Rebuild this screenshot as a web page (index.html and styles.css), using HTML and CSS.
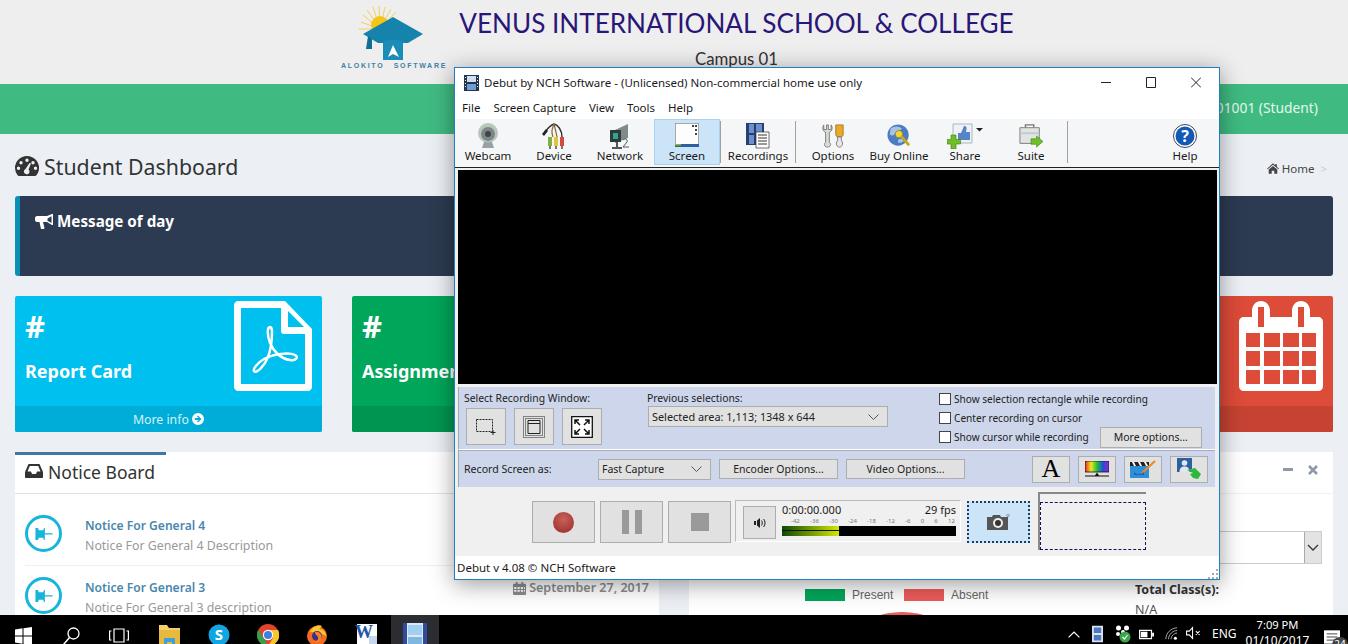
FILE: index.html
```html
<!DOCTYPE html>
<html lang="en">
<head>
  <meta charset="UTF-8">
  <title>Student Dashboard</title>
  <link rel="stylesheet" href="styles.css">
</head>
<body>
<div class="screen">
  <div class="page">
    <header class="site-head">
      <div class="logo">
        <svg class="logo-art" width="80" height="56" viewBox="0 0 80 56">
          <g stroke="#f3c53a" stroke-width="1" opacity=".75">
            <path d="M34 24L15 17M34 24L17 10M34 24L21 5M34 24L27 2M34 24L33 1M34 24L39 2M34 24L45 4M34 24L50 7M34 24L13 24"/>
          </g>
          <circle cx="34" cy="20" r="9" fill="#f5c518"/>
          <path d="M47 12L77 29 62 38H32L17 29z" fill="#1583ab"/>
          <path d="M22 31L26 34V44H20z" fill="#0f6f92"/>
          <path d="M37 37c5-3 15-3 20 0v18H37z" fill="#1a8db6"/>
          <path d="M47 40l6 12-6-3-5 3z" fill="#fff"/>
        </svg>
        <div class="logo-text"><span>ALOKITO</span><span>SOFTWARE</span></div>
      </div>
      <div class="school">
        <h1>VENUS INTERNATIONAL SCHOOL &amp; COLLEGE</h1>
        <p>Campus 01</p>
      </div>
    </header>
    <div class="green-bar">901001 (Student)</div>

    <main class="content">
      <div class="title-row">
        <h2>
          <svg class="ico-dash" viewBox="0 0 24 20"><path fill="#333" fill-rule="evenodd" d="M12 0a12 12 0 0 1 12 12c0 3-1 5.500-2.600 7.300-.3.400-.8.700-1.400.700H4c-.6 0-1.100-.3-1.400-.7A11.700 11.700 0 0 1 0 12 12 12 0 0 1 12 0zM12 2.500a1.700 1.700 0 1 0 0 3.400 1.700 1.700 0 0 0 0-3.400zM6 5a1.700 1.700 0 1 0 0 3.400A1.700 1.700 0 0 0 6 5zM18 5a1.700 1.700 0 1 0 0 3.400A1.700 1.700 0 0 0 18 5zM3.500 10.500a1.700 1.700 0 1 0 0 3.400 1.700 1.700 0 0 0 0-3.400zM20.500 10.500a1.700 1.700 0 1 0 0 3.400 1.700 1.700 0 0 0 0-3.400zM14.500 7L10.500 13a2.800 2.800 0 1 0 3 .4L16 7.500z"/></svg>
          Student Dashboard
        </h2>
        <div class="crumb">
          <svg class="ico-home" viewBox="0 0 14 12"><path fill="#444" d="M7 0l2.500 2.200V1h2v3l2.500 2.200-.7.800L7 1.700.7 7 0 6.200zM2 7.300L7 3l5 4.300V12H8.500V8.500h-3V12H2z"/></svg>
          Home <span class="crumb-sep">&gt;</span>
        </div>
      </div>

      <section class="message">
        <h3>
          <svg class="ico-horn" viewBox="0 0 18 15"><path fill="#fff" fill-rule="evenodd" d="M17 0h1v11h-1l-5-3H8l1.500 6-.5 1H6l-1.500-7H2C1 8 0 7 0 6V4c0-1 1-2 2-2h10zM16.500 2.200L12.500 4.500v2.200l4 2.200z"/></svg>
          Message of day
        </h3>
      </section>

      <section class="cards">
        <div class="card card-blue">
          <div class="card-body">
            <div class="card-text"><b>#</b><strong>Report Card</strong></div>
            <svg class="card-ico-pdf" viewBox="0 0 78 90">
              <path fill="#fff" fill-rule="evenodd" d="M4 0h47l27 28v58c0 2-2 4-4 4H4c-2 0-4-2-4-4V4c0-2 2-4 4-4zM7 7v76h64V33H50c-2 0-3-1-3-3V7zM54 10v16h16z"/>
              <path fill="none" stroke="#fff" stroke-width="2.500" d="M36 26c-3 0-3 8 0 16 3 7 10 16 20 17 6 1 9-3 5-5-6-3-22-1-31 4-7 4-11 10-10 12 2 3 10-4 14-14 3-8 4-17 4-25 0-3-1-5-2-5z"/>
            </svg>
          </div>
          <div class="card-foot">More info
            <svg class="ico-go" viewBox="0 0 12 12"><path fill="#fff" fill-rule="evenodd" d="M6 0a6 6 0 1 1 0 12A6 6 0 0 1 6 0zM6 2.500L5 3.500 6.700 5.100H2.800v1.800h3.900L5 8.500l1 1L9.500 6z"/></svg>
          </div>
        </div>
        <div class="card card-green">
          <div class="card-body">
            <div class="card-text"><b>#</b><strong>Assignment</strong></div>
          </div>
          <div class="card-foot"></div>
        </div>
        <div class="card card-hidden"></div>
        <div class="card card-red">
          <div class="card-body card-body-end">
            <svg class="card-ico-cal" viewBox="0 0 84 90">
              <path fill="#fff" fill-rule="evenodd" d="M5 16h8v-6c0-6 4-10 9-10s9 4 9 10v6h22v-6c0-6 4-10 9-10s9 4 9 10v6h8c3 0 5 2 5 5v64c0 3-2 5-5 5H5c-3 0-5-2-5-5V21c0-3 2-5 5-5zM19 6v20h6V6zM59 6v20h6V6zM7 32v14h14V32zM25 32v14h16V32zM44 32v14h16V32zM63 32v14h14V32zM7 50v15h14V50zM25 50v15h16V50zM44 50v15h16V50zM63 50v15h14V50zM7 69v14h14V69zM25 69v14h16V69zM44 69v14h16V69zM63 69v14h14V69z"/>
            </svg>
          </div>
          <div class="card-foot"></div>
        </div>
      </section>

      <section class="panels">
        <div class="panel">
          <div class="panel-head">
            <h4 class="tab">
              <svg class="ico-inbox" viewBox="0 0 18 14"><path fill="#333" fill-rule="evenodd" d="M3.500 0h11L18 8v5c0 .6-.4 1-1 1H1c-.6 0-1-.4-1-1V8zM4.800 2L2.500 7.500H6L7 10h4l1-2.500h3.500L13.200 2z"/></svg>
              Notice Board
            </h4>
          </div>
          <ul class="notices">
            <li>
              <span class="pin"><svg viewBox="0 0 20 14"><path fill="#19b4dc" d="M0 0h3l1 2.500h5L10 0h1v14h-1L9 11.500H4L3 14H0zM11 6h9v1.500h-9z"/></svg></span>
              <div class="notice-text"><a>Notice For General 4</a><p>Notice For General 4 Description</p></div>
              <span class="notice-date">September 27, 2017</span>
            </li>
            <li>
              <span class="pin"><svg viewBox="0 0 20 14"><path fill="#19b4dc" d="M0 0h3l1 2.500h5L10 0h1v14h-1L9 11.500H4L3 14H0zM11 6h9v1.500h-9z"/></svg></span>
              <div class="notice-text"><a>Notice For General 3</a><p>Notice For General 3 description</p></div>
              <span class="notice-date">
                <svg class="ico-cal" viewBox="0 0 14 14"><path fill="#8c8c8c" fill-rule="evenodd" d="M1 2h2V0h2v2h4V0h2v2h2c.6 0 1 .4 1 1v10c0 .6-.4 1-1 1H1c-.6 0-1-.4-1-1V3c0-.6.4-1 1-1zM1.200 5.500v2h2.500v-2zM4.800 5.500v2h2.500v-2zM8.400 5.500v2h2.400v-2zM11.800 5.500v2h1v-2zM1.200 8.500v2h2.500v-2zM4.800 8.500v2h2.500v-2zM8.400 8.500v2h2.400v-2zM11.800 8.500v2h1v-2z"/></svg>
                September 27, 2017</span>
            </li>
          </ul>
        </div>
        <div class="panel">
          <div class="panel-head panel-head-end">
            <span class="tool-min"></span>
            <svg class="tool-x" viewBox="0 0 10 10"><path stroke="#8d99a8" stroke-width="2.600" d="M1 1l8 8M9 1L1 9"/></svg>
          </div>
          <div class="att-select"><span class="att-arrow"><svg width="12" height="8" viewBox="0 0 12 8"><path fill="none" stroke="#333" stroke-width="1.300" d="M1 1l5 5 5-5"/></svg></span></div>
          <div class="att-body">
            <div class="att-chart">
              <div class="legend">
                <i class="swatch sw-present"></i><span>Present</span>
                <i class="swatch sw-absent"></i><span>Absent</span>
              </div>
              <div class="pie"></div>
            </div>
            <div class="att-side"><strong>Total Class(s):</strong><p>N/A</p></div>
          </div>
        </div>
      </section>
    </main>
  </div>

  <div class="taskbar">
    <svg class="tb-ico tb-win" viewBox="0 0 17 18"><path fill="#fff" d="M0 2.500L7.500 1.300V8.500H0zM8.500 1.200L17 0V8.500H8.500zM0 9.500H7.500V16.700L0 15.500zM8.500 9.500H17V18L8.500 16.800z"/></svg>
    <svg class="tb-ico tb-search" viewBox="0 0 17 18"><circle cx="10.500" cy="6.500" r="5.500" fill="none" stroke="#fff" stroke-width="1.300"/><path stroke="#fff" stroke-width="1.500" d="M6.500 10.500L.5 17.500"/></svg>
    <svg class="tb-ico tb-task" viewBox="0 0 20 15"><path fill="none" stroke="#fff" stroke-width="1.200" d="M5 1h10v13H5zM2.500 3H.6v9h1.900M17.500 3h1.900v9h-1.900"/></svg>
    <svg class="tb-ico tb-app" viewBox="0 0 22 22"><path fill="#f5cf6b" d="M0 1h8l2 3h11v18H0z"/><path fill="#e8b93f" d="M0 6h21v16H0z"/><path fill="#3f9fd8" d="M5 14h11v8h-3v-4H8v4H5z"/></svg>
    <svg class="tb-ico tb-app" viewBox="0 0 22 22"><circle cx="11" cy="11" r="10.500" fill="#11a5e3"/><text x="11" y="16" text-anchor="middle" class="tb-skype">S</text></svg>
    <svg class="tb-ico tb-app" viewBox="0 0 22 22"><circle cx="11" cy="11" r="11" fill="#e0442f"/><path fill="#2da44e" d="M11 22A11 11 0 0 1 1.200 6L7 15z"/><path fill="#f7c62f" d="M11 22l5-8-5-8h10a11 11 0 0 1-10 16z"/><circle cx="11" cy="11" r="5.200" fill="#fff"/><circle cx="11" cy="11" r="4" fill="#3f7fe0"/></svg>
    <svg class="tb-ico tb-app" viewBox="0 0 22 22"><circle cx="11" cy="12" r="10" fill="#f26b21"/><path fill="#ffc52e" d="M4 8c2-5 8-8 12-6l-3 3c4 0 7 3 7 7l-6-3z"/><circle cx="11" cy="12" r="5" fill="#39308f"/><path fill="#f58220" d="M9 8c5-1 8 3 6 8-2 3-7 3-9 1 4 1 7-1 6-4-1-2-3-2-3-5z"/></svg>
    <svg class="tb-ico tb-app" viewBox="0 0 22 22"><path fill="#fff" d="M2 0h20v22H2z"/><path fill="#c8d7ee" d="M14 12h8v10h-8z"/><text x="0" y="14" class="tb-word">W</text></svg>
    <div class="tb-active">
      <svg width="24" height="29" viewBox="0 0 24 29"><path fill="#dfe7f7" d="M0 0h24v29H0z"/><path fill="#324a9c" d="M0 0h4v29H0zM20 0h4v29h-4z"/><path fill="#9fd0f2" d="M5 2h14v10H5z"/><path fill="#7fb7e3" d="M5 14h14v15H5z"/></svg>
    </div>
    <div class="tray">
      <svg class="tray-chev" viewBox="0 0 12 7"><path fill="none" stroke="#fff" stroke-width="1.200" d="M.6 6.400L6 1l5.400 5.400"/></svg>
      <svg class="tray-ico" viewBox="0 0 12 18"><path fill="#d5e3f5" d="M0 0h12v18H0z"/><path fill="#4e79bd" d="M2 2h8v6H2zM2 10h8v6H2z"/></svg>
      <svg class="tray-nv" viewBox="0 0 16 18"><g fill="#fff"><circle cx="3.500" cy="3" r="2.500"/><circle cx="11.500" cy="3" r="2.500"/><circle cx="3" cy="9" r="2"/><circle cx="8" cy="7" r="2"/></g><circle cx="10" cy="12" r="5.500" fill="#3aa64a"/><path stroke="#fff" stroke-width="1.200" fill="none" d="M7.500 12l2 2 3-4"/></svg>
      <svg class="tray-bat" viewBox="0 0 16 11"><path fill="none" stroke="#fff" stroke-width="1.300" d="M.7 1h12.600v9H.7z"/><path fill="#fff" d="M2 2.500h7v6H2zM14 3.500h2v4h-2z"/></svg>
      <svg class="tray-wifi" viewBox="0 0 15 15"><g fill="none" stroke="#bbb" stroke-width="1"><path d="M1 14C1 7 7 1 14 1M4 14c0-5 5-10 10-10M7 14c0-3 3-7 7-7"/></g><circle cx="12" cy="13" r="1.800" fill="#fff"/></svg>
      <svg class="tray-vol" viewBox="0 0 16 14"><path fill="none" stroke="#fff" stroke-width="1.100" d="M.6 5h2.900L7 1.200v11.600L3.500 9H.6zM10.500 5l4 4M14.500 5l-4 4"/></svg>
      <span class="tray-lang">ENG</span>
      <div class="tray-clock"><span class="tray-time">7:09 PM</span><span>01/10/2017</span></div>
      <div class="tray-note">
        <svg width="16" height="14" viewBox="0 0 18 15"><path fill="#fff" d="M0 0h18v15H0z"/><path stroke="#333" d="M3 4h12M3 7.500h12M3 11h9"/></svg>
        <span class="tray-badge">24</span>
      </div>
    </div>
  </div>

  <div class="debut">
    <div class="titlebar">
      <svg class="app-ico" width="15" height="16" viewBox="0 0 15 16"><path fill="#26354f" d="M0 0h15v16H0z"/><path fill="#cfe0f2" d="M3 1h9v6H3z"/><path fill="#6f9fd2" d="M3 9h9v6H3z"/><path fill="#eef" d="M1 2h1v1H1zM1 5h1v1H1zM1 8h1v1H1zM1 11h1v1H1zM13 2h1v1h-1zM13 5h1v1h-1zM13 8h1v1h-1zM13 11h1v1h-1z"/></svg>
      <span class="title-text">Debut by NCH Software - (Unlicensed) Non-commercial home use only</span>
      <span class="win-btns">
        <svg width="10" height="11" viewBox="0 0 10 11"><path stroke="#222" d="M0 5.500h10"/></svg>
        <svg width="10" height="11" viewBox="0 0 10 11"><path fill="none" stroke="#222" d="M.5.500h9v10h-9z"/></svg>
        <svg width="10" height="11" viewBox="0 0 10 11"><path stroke="#222" d="M0 .5l10 10M10 .5l-10 10"/></svg>
      </span>
    </div>
    <nav class="menubar"><span>File</span><span>Screen Capture</span><span>View</span><span>Tools</span><span>Help</span></nav>
    <div class="toolbar">
      <div class="tool">
        <svg viewBox="0 0 24 26"><circle cx="12" cy="10" r="10" fill="#b7c8b8"/><circle cx="12" cy="11" r="7" fill="#7d8688"/><circle cx="12" cy="11" r="3" fill="#3d4448"/><path fill="#99a3a7" d="M8 19h8l2 6H6z"/></svg>
        <span>Webcam</span>
      </div>
      <div class="tool">
        <svg viewBox="0 0 24 26"><path fill="none" stroke="#333" stroke-width="1.400" d="M3 9C6 5 9 2 12 1c4 1 8 6 8 13"/><path fill="none" stroke="#8a6a3a" stroke-width="1.200" d="M12 1c-2 5-3 8-1 13M12 1c1 4 2 8 3 13"/><path fill="#222" d="M0 11l4-5 2 2-4 5z"/><path fill="#7fb13c" d="M6 14h4v9H6z"/><path fill="#e3c33a" d="M12 14h4v9h-4z"/><path fill="#d64a3a" d="M18 14h4v9h-4z"/><path fill="#777" d="M7 23h2v3H7zM13 23h2v3h-2zM19 23h2v3h-2z"/></svg>
        <span>Device</span>
      </div>
      <div class="tool">
        <svg viewBox="0 0 24 26"><path fill="#7f8a8a" d="M7 7l13-6v14L7 20z"/><path fill="#2f3a3a" d="M2 7h11v12H2z"/><path fill="#34a394" d="M5 10h5v6H5z"/><path fill="#555" d="M8 19h2v5H8zM4 24h10v2H4z"/><path fill="none" stroke="#555" d="M15 17c2-2 5-1 4 2l-4 5h6"/></svg>
        <span>Network</span>
      </div>
      <div class="tool tool-on">
        <svg class="ico-wide" viewBox="0 0 24 24"><path fill="#fdfdfd" stroke="#555" stroke-width=".6" d="M.3.300h23.400v23H.3z"/><path fill="#2f5f9f" d="M0 21h24v3H0z"/><path fill="#8cb82f" d="M0 21h6v1.500H0z"/><path fill="#444" d="M17 2h2v2h-2zM20 2h2v2h-2zM20 6h2v2h-2zM20 10h2v2h-2z"/></svg>
        <span>Screen</span>
      </div>
      <i class="tool-sep"></i>
      <div class="tool tool-rec">
        <svg viewBox="0 0 24 26"><path fill="#27406f" d="M0 0h18v22H0z"/><path fill="#6d8fd0" d="M3 1h5v9H3zM10 1h6v9h-6zM3 12h5v9H3z"/><path fill="#fff" stroke="#333" stroke-width=".7" d="M10 9h13v16H10z"/><path stroke="#333" d="M12 12h9M12 15h9M12 18h9M12 21h9"/></svg>
        <span>Recordings</span>
      </div>
      <i class="tool-sep"></i>
      <div class="tool">
        <svg viewBox="0 0 26 26"><path fill="#d7ddd5" stroke="#777" d="M3 1C1 4 2 8 5 9v11c-2 1-2 5 2 5s4-4 2-5V9c3-1 4-5 2-8v5H8V1H6v5H3z"/><path fill="#e9a92b" stroke="#aa7a1c" d="M16 1h8v10c0 2-1 3-3 3h-2c-2 0-3-1-3-3z"/><path fill="#e8e8e8" stroke="#777" d="M18 14h4v4c2 1 2 7-2 7s-4-6-2-7z"/></svg>
        <span>Options</span>
      </div>
      <div class="tool">
        <svg viewBox="0 0 26 26"><circle cx="12" cy="12" r="11.500" fill="#4b7dc4"/><path fill="#a9c3e6" d="M4 5c4-3 9-3 12 0-2 3-5 2-7 5s-4 3-6 1zM12 17c3-2 6-1 8 0-3 3-6 4-8 3z"/><circle cx="13" cy="11" r="4" fill="#f1d83a" stroke="#806f0e" stroke-width=".7"/><path stroke="#c7a915" stroke-width="3" d="M15 13l9 10"/></svg>
        <span>Buy Online</span>
      </div>
      <div class="tool tool-share">
        <svg viewBox="0 0 36 26"><path fill="#eef2f8" stroke="#9aa" stroke-width=".8" d="M6 1h19v19H6z"/><path fill="#5684c7" d="M11 10h3l3-7c3 0 3 2 2 6h4v8H11z"/><path fill="#6fbf2a" stroke="#3f7a14" stroke-width=".6" d="M4 12h5v4.500h4.500v4.500H9v5H4v-5H0v-4.500h4z"/><path fill="#222" d="M29 5h7l-3.500 3.500z"/></svg>
        <span>Share</span>
      </div>
      <div class="tool">
        <svg viewBox="0 0 26 26"><path fill="none" stroke="#777" stroke-width="1.500" d="M7 4V1h9v3"/><path fill="#e2e4e4" stroke="#777" d="M1 4h21v17H1z"/><path fill="#bcc" d="M1 9h21v2H1z"/><path fill="#6fbe2c" stroke="#3c7c12" stroke-width=".6" d="M13 16h6v-3l7 6-7 6v-3h-6z"/></svg>
        <span>Suite</span>
      </div>
      <i class="tool-sep tool-sep-last"></i>
      <div class="tool tool-help">
        <svg viewBox="0 0 24 24"><circle cx="12" cy="12" r="11.500" fill="#fff" stroke="#445"/><circle cx="12" cy="12" r="9.500" fill="#1259b5"/><text x="12" y="18" text-anchor="middle" class="help-q">?</text></svg>
        <span>Help</span>
      </div>
    </div>
    <div class="preview"></div>

    <div class="blue-panel panel-select">
      <div class="sel-col">
        <label>Select Recording Window:</label>
        <div class="sel-btns">
          <button class="wbtn sel-btn"><svg width="20" height="16" viewBox="0 0 20 16"><path fill="none" stroke="#222" stroke-dasharray="2 1" d="M.5.500h16v12H.5z"/><path stroke="#222" d="M17 11v5M14.500 13.500h5"/></svg></button>
          <button class="wbtn sel-btn"><svg width="22" height="22" viewBox="0 0 22 22"><path fill="none" stroke="#222" stroke-dasharray="1 1" d="M.5.500h21v21H.5zM2.500 2.500h17v17h-17z"/><path fill="none" stroke="#222" d="M5 4.500h12v13H5zM5 7.500h12"/></svg></button>
          <button class="wbtn sel-btn"><svg width="22" height="22" viewBox="0 0 22 22"><path fill="#fff" stroke="#111" stroke-width="1.300" d="M.7.700h20.600v20.600H.7z"/><path fill="none" stroke="#111" stroke-width="1.500" d="M4 4l5 5M18 4l-5 5M4 18l5-5M18 18l-5-5M4 8V4h4M14 4h4v4M4 14v4h4M18 14v4h-4"/></svg></button>
        </div>
      </div>
      <div class="prev-col">
        <label>Previous selections:</label>
        <div class="wselect prev-select"><span>Selected area: 1,113; 1348 x 644</span><svg width="11" height="6" viewBox="0 0 11 6"><path fill="none" stroke="#555" d="M.5.500l5 5 5-5"/></svg></div>
      </div>
      <div class="check-col">
        <div class="check"><i></i>Show selection rectangle while recording</div>
        <div class="check"><i></i>Center recording on cursor</div>
        <div class="check check-last"><i></i>Show cursor while recording<button class="wbtn more-btn">More options...</button></div>
      </div>
    </div>

    <div class="blue-panel panel-record">
      <label class="rec-label">Record Screen as:</label>
      <div class="wselect fast-select"><span>Fast Capture</span><svg width="11" height="6" viewBox="0 0 11 6"><path fill="none" stroke="#555" d="M.5.500l5 5 5-5"/></svg></div>
      <button class="wbtn opt-btn">Encoder Options...</button>
      <button class="wbtn opt-btn">Video Options...</button>
      <div class="fx-btns">
        <button class="wbtn fx-btn fx-text">A</button>
        <button class="wbtn fx-btn"><svg width="24" height="16" viewBox="0 0 24 16"><defs><linearGradient id="rb"><stop offset="0" stop-color="#e3262b"/><stop offset=".25" stop-color="#f7e51e"/><stop offset=".5" stop-color="#1fc13a"/><stop offset=".75" stop-color="#1f4fd8"/><stop offset="1" stop-color="#a11fd0"/></linearGradient></defs><path d="M0 0h24v11H0z" fill="url(#rb)" stroke="#111" stroke-width=".8"/><path fill="#111" d="M0 14.500h24v1H0zM10 14.500l2-3 2 3z"/></svg></button>
        <button class="wbtn fx-btn"><svg width="26" height="18" viewBox="0 0 26 18"><path fill="#222" d="M0 2h19v4H0z"/><path fill="#fff" d="M2 2h2l2 4H4zM8 2h2l2 4h-2zM14 2h2l2 4h-2z"/><path fill="#2f8fd6" d="M0 6h19v12H0z"/><path stroke="#e88a2a" stroke-width="2.200" d="M12 13L25 1"/><path fill="#2460b0" d="M4 12c3 3 7 3 10 0v3H4z"/></svg></button>
        <button class="wbtn fx-btn"><svg width="24" height="22" viewBox="0 0 24 22"><path fill="#2f5f9f" d="M0 0h15v14H0z"/><circle cx="7.500" cy="5" r="2.800" fill="#dfe7f0"/><path fill="#dfe7f0" d="M2.500 14c0-4 2-5.500 5-5.500s5 1.500 5 5.500z"/><path fill="#2eb83b" d="M10 12l8-2 6 6-3 5-5-1-3-4 3-1z"/></svg></button>
      </div>
    </div>

    <div class="control-bar">
      <button class="wbtn ctl-btn"><span class="rec-dot"></span></button>
      <button class="wbtn ctl-btn"><span class="pause-bars"><i></i><i></i></span></button>
      <button class="wbtn ctl-btn"><span class="stop-box"></span></button>
      <div class="meter-box">
        <button class="wbtn spk-btn"><svg width="12" height="10" viewBox="0 0 12 10"><path fill="#222" d="M0 3h2v4H0zM3 2.500L6 0v10L3 7.500z"/><path fill="none" stroke="#222" d="M7.500 2.500c1 1.500 1 3.500 0 5M9.500 1c2 2.500 2 5.500 0 8"/></svg></button>
        <div class="meter-col">
          <div class="meter-top"><span>0:00:00.000</span><span>29 fps</span></div>
          <div class="meter-ticks"><span>-42</span><span>-36</span><span>-30</span><span>-24</span><span>-18</span><span>-12</span><span>-6</span><span>0</span><span>6</span><span>12</span></div>
          <div class="meter-bar"><div class="meter-fill"></div></div>
        </div>
      </div>
      <button class="wbtn snap-btn"><svg width="23" height="16" viewBox="0 0 23 16"><path fill="#555" d="M0 3h5l1-2h7l1 2h7v13H0z"/><circle cx="11" cy="9" r="5" fill="#eee"/><circle cx="11" cy="9" r="3" fill="#333"/><circle cx="21" cy="1.500" r="1.300" fill="none" stroke="#666" stroke-width=".6"/></svg></button>
      <div class="thumb"><div class="thumb-dash"></div></div>
    </div>
    <div class="statusbar">
      <span>Debut v 4.08 © NCH Software</span>
      <svg class="grip" width="10" height="10" viewBox="0 0 10 10"><path fill="#aaa" d="M8 0h2v2H8zM4 4h2v2H4zM8 4h2v2H8zM0 8h2v2H0zM4 8h2v2H4zM8 8h2v2H8z"/></svg>
    </div>
  </div>
</div>
</body>
</html>
```

FILE: styles.css
```css
* {
  box-sizing: border-box;
}

html, body {
  margin: 0;
  height: 100%;
  overflow: hidden;
}

body {
  font-family: "Noto Sans", Arial, sans-serif;
  color: #333;
}

.screen {
  position: relative;
  width: 1348px;
  height: 644px;
  overflow: hidden;
  display: flex;
  flex-direction: column;
}

.page {
  flex: 1;
  min-height: 0;
  overflow: hidden;
  background: #ecf0f5;
}

/* school header */
.site-head {
  height: 84px;
  background: #eeeeee;
  display: flex;
  padding-left: 341px;
}

.logo {
  width: 106px;
  padding-top: 5px;
  display: flex;
  flex-direction: column;
  align-items: center;
}

.logo-art {
  margin-left: -16px;
  display: block;
}

.logo-text {
  width: 100%;
  display: flex;
  justify-content: space-between;
  font-family: "Liberation Sans", sans-serif;
  font-size: 7px;
  font-weight: bold;
  letter-spacing: 1.7px;
  color: #3d83a5;
  margin-top: 1px;
}

.school {
  width: 555px;
  margin-left: 12px;
  text-align: center;
}

.school h1 {
  margin: 6px 0 0;
  font-family: Lato, sans-serif;
  font-size: 26.100px;
  font-weight: 400;
  line-height: 34px;
  white-space: nowrap;
  color: #2a1678;
}

.school p {
  margin: 9px 0 0;
  font-family: Lato, sans-serif;
  font-size: 16.800px;
  line-height: 20px;
  color: #333;
}

.green-bar {
  height: 50px;
  background: #3fbb82;
  color: #e6f7ee;
  font-size: 13.800px;
  line-height: 48px;
  text-align: right;
  padding-right: 30px;
}

/* dashboard */
.content {
  padding: 0 15px;
}

.title-row {
  height: 62px;
  display: flex;
  justify-content: space-between;
  align-items: center;
  padding-top: 2px;
}

.title-row h2 {
  margin: 0;
  font-size: 21.300px;
  font-weight: 400;
  display: flex;
  align-items: center;
  gap: 5px;
}

.ico-dash {
  width: 24px;
  height: 20px;
}

.crumb {
  font-size: 11.500px;
  color: #444;
  display: flex;
  align-items: center;
  gap: 3px;
  margin-top: 4px;
  margin-right: 6px;
}

.ico-home {
  width: 12px;
  height: 11px;
}

.crumb-sep {
  color: #ccc;
  margin-left: 3px;
}

.message {
  height: 80px;
  background: #2c3b51;
  border-left: 5px solid #0a8fb8;
  border-radius: 3px;
  padding: 13px 15px;
}

.message h3 {
  margin: 0;
  color: #fff;
  font-size: 15.200px;
  font-weight: 700;
  line-height: 24px;
  display: flex;
  align-items: center;
  gap: 4px;
}

.ico-horn {
  width: 18px;
  height: 15px;
}

.cards {
  margin-top: 20px;
  display: grid;
  grid-template-columns: repeat(4, 307px);
  gap: 30px;
}

.card {
  height: 136px;
  border-radius: 2px;
  color: #fff;
  overflow: hidden;
  display: flex;
  flex-direction: column;
}

.card-body {
  height: 110px;
  padding: 5px 10px 0;
  display: flex;
  justify-content: space-between;
}

.card-body-end {
  justify-content: flex-end;
}

.card-text b {
  display: block;
  font-size: 31px;
  line-height: 42px;
  margin-top: 4px;
}

.card-text strong {
  display: block;
  font-size: 18px;
  line-height: 26px;
  margin-top: 11px;
  white-space: nowrap;
}

.card-ico-pdf {
  width: 78px;
  height: 90px;
}

.card-ico-cal {
  width: 84px;
  height: 90px;
}

.card-foot {
  height: 26px;
  font-size: 12.300px;
  line-height: 28px;
  text-align: center;
  color: #d5f1fa;
}

.ico-go {
  width: 12px;
  height: 12px;
  vertical-align: -1px;
}

.card-blue {
  background: #00c0ef;
}

.card-blue .card-foot {
  background: #00acd8;
}

.card-green {
  background: #00a65a;
}

.card-green .card-foot {
  background: #009551;
}

.card-red {
  background: #dd4b39;
}

.card-red .card-foot {
  background: #c64333;
}

.card-hidden {
  background: #f39c12;
}

/* lower panels */
.panels {
  margin-top: 20px;
  display: grid;
  grid-template-columns: 644px 644px;
  gap: 30px;
}

.panel {
  background: #fff;
  height: 200px;
  border-radius: 2px;
}

.panel-head {
  height: 42px;
  border-bottom: 1px solid #dfe3e6;
}

.panel-head-end {
  border-bottom-color: #f2f2f2;
  display: flex;
  justify-content: flex-end;
  align-items: center;
  gap: 15px;
  padding: 0 15px 6px 0;
}

.tool-min {
  width: 10px;
  height: 3px;
  background: #8d99a8;
}

.tool-x {
  width: 10px;
  height: 10px;
}

.tab {
  margin: 0;
  width: 151px;
  height: 42px;
  border-top: 3px solid #3c78a8;
  padding-left: 10px;
  font-size: 17.500px;
  font-weight: 400;
  line-height: 34px;
  display: flex;
  align-items: flex-start;
  gap: 5px;
  white-space: nowrap;
}

.ico-inbox {
  width: 18px;
  height: 14px;
  margin-top: 9px;
}

.notices {
  list-style: none;
  margin: 0;
  padding: 10px 10px 0;
}

.notices li {
  height: 62px;
  border-bottom: 1px solid #f0f0f0;
  display: flex;
  padding-top: 11px;
}

.pin {
  width: 37px;
  height: 37px;
  border: 3px solid #19b4dc;
  border-radius: 50%;
  display: flex;
  align-items: center;
  justify-content: center;
  flex-shrink: 0;
}

.pin svg {
  width: 18px;
  height: 12px;
}

.notice-text {
  margin: 1px 0 0 23px;
  flex: 1;
  font-size: 12.100px;
}

.notice-text a {
  display: block;
  color: #4a87ad;
  font-weight: 600;
  line-height: 20px;
}

.notice-text p {
  margin: 0;
  color: #999;
  font-size: 12.350px;
  line-height: 20px;
}

.notice-date {
  font-size: 12.500px;
  font-weight: 600;
  color: #8c8c8c;
  line-height: 20px;
  white-space: nowrap;
  display: flex;
  align-items: center;
  gap: 3px;
  height: 20px;
  margin-top: 1px;
}

.ico-cal {
  width: 13px;
  height: 13px;
}

.att-select {
  margin: 37px 11px 0;
  height: 33px;
  border: 1px solid #ccc;
  display: flex;
  justify-content: flex-end;
}

.att-arrow {
  width: 17px;
  background: #e3e3e3;
  border-left: 1px solid #aaa;
  display: flex;
  align-items: center;
  justify-content: center;
}

.att-body {
  margin-top: 20px;
  display: flex;
}

.att-chart {
  width: 446px;
}

.legend {
  display: flex;
  align-items: center;
  padding-left: 116px;
  font-family: "Liberation Sans", sans-serif;
  font-size: 12px;
  color: #666;
  height: 22px;
}

.swatch {
  width: 40px;
  height: 12px;
  margin-right: 7px;
}

.legend span {
  width: 52px;
}

.sw-present {
  background: #00a65a;
}

.sw-absent {
  background: #ec5b5b;
}

.pie {
  width: 160px;
  height: 160px;
  border-radius: 50%;
  background: #e85c5c;
  margin: 6px 0 0 133px;
}

.att-side {
  font-size: 12.500px;
  line-height: 20px;
  margin-top: -4px;
}

.att-side strong {
  display: block;
}

.att-side p {
  margin: 0;
  color: #555;
}

/* windows taskbar */
.taskbar {
  height: 29px;
  flex-shrink: 0;
  background: #000;
  display: flex;
  align-items: flex-start;
  overflow: hidden;
  position: relative;
}

.tb-ico {
  flex-shrink: 0;
  display: block;
}

.tb-win {
  width: 17px;
  height: 18px;
  margin: 12px 0 0 15px;
}

.tb-search {
  width: 17px;
  height: 18px;
  margin: 12px 0 0 31px;
}

.tb-task {
  width: 20px;
  height: 15px;
  margin: 13px 0 0 29px;
}

.tb-app {
  width: 22px;
  height: 22px;
  margin: 9px 0 0 27px;
}

.tb-app:nth-of-type(4) {
  margin-left: 30px;
}

.tb-skype {
  fill: #fff;
  font-size: 15px;
  font-weight: 700;
}

.tb-word {
  fill: #2456a6;
  font-family: "Liberation Serif", serif;
  font-size: 18px;
  font-weight: 700;
}

.tb-active {
  width: 48px;
  height: 29px;
  margin-left: 14px;
  background: #2b2d30;
  padding: 8px 12px 0;
}

.tray {
  margin-left: auto;
  height: 29px;
  display: flex;
  align-items: flex-start;
  color: #fff;
}

.tray-chev {
  width: 12px;
  height: 7px;
  margin-top: 16px;
  margin-right: 12px;
}

.tray-ico {
  width: 11px;
  height: 18px;
  margin-top: 10px;
  margin-right: 12px;
}

.tray-nv {
  width: 16px;
  height: 18px;
  margin-top: 10px;
  margin-right: 8px;
}

.tray-bat {
  width: 15px;
  height: 11px;
  margin-top: 14px;
  margin-right: 11px;
}

.tray-wifi {
  width: 13px;
  height: 15px;
  margin-top: 11px;
  margin-right: 8px;
}

.tray-vol {
  width: 15px;
  height: 14px;
  margin-top: 11px;
  margin-right: 11px;
}

.tray-lang {
  font-size: 12px;
  line-height: 18px;
  margin-top: 10px;
  width: 26px;
}

.tray-clock {
  width: 79px;
  font-size: 12px;
  line-height: 16px;
  text-align: center;
  margin-top: 2px;
}

.tray-clock span {
  display: block;
  white-space: nowrap;
}

.tray-clock .tray-time {
  font-size: 11.200px;
}

.tray-note {
  width: 31px;
  padding: 12px 0 0 7px;
  position: relative;
}

.tray-badge {
  position: absolute;
  left: 15px;
  top: 22px;
  width: 16px;
  height: 16px;
  border-radius: 50%;
  background: #444;
  font-size: 10px;
  line-height: 14px;
  text-align: center;
}

/* debut window */
.debut {
  position: absolute;
  left: 454px;
  top: 67px;
  width: 766px;
  height: 513px;
  background: #f0f0f0;
  border: 1px solid #1f7fbf;
  box-shadow: 0 4px 22px rgba(0, 0, 0, 0.4);
  font-size: 11.500px;
  color: #1a1a1a;
  display: flex;
  flex-direction: column;
}

.titlebar {
  height: 29px;
  background: #fff;
  display: flex;
  align-items: center;
  padding-left: 9px;
  flex-shrink: 0;
}

.app-ico {
  margin-right: 5px;
}

.title-text {
  white-space: nowrap;
}

.win-btns {
  margin-left: auto;
  display: flex;
  gap: 35px;
  padding-right: 18px;
}

.menubar {
  height: 22px;
  background: #fff;
  display: flex;
  gap: 13px;
  padding-left: 7px;
  flex-shrink: 0;
  line-height: 21px;
}

.toolbar {
  height: 49px;
  padding-bottom: 2px;
  background: #f5f6f7;
  border-bottom: 1px solid #222;
  display: flex;
  flex-shrink: 0;
}

.tool {
  width: 66px;
  display: flex;
  flex-direction: column;
  align-items: center;
  padding-top: 3px;
  border: 1px solid transparent;
  line-height: 16px;
}

.tool span {
  margin-top: -1px;
}

.tool svg {
  width: 24px;
  height: 26px;
}

.tool svg.ico-wide {
  width: 24px;
  height: 24px;
  margin-bottom: 2px;
}

.tool-on {
  background: #cce4f7;
  border-color: #a9d2f0;
  margin-left: 1px;
}

.tool-rec {
  width: 74px;
}

.tool-share svg {
  width: 36px;
}

.tool-sep {
  width: 1px;
  height: 42px;
  background: #a0a0a0;
  margin: 2px 0 0;
}

.tool-sep-last {
  margin-left: 3px;
}

.tool-rec + .tool-sep {
  margin-right: 4px;
}

.tool-help {
  margin-left: auto;
  margin-right: 1px;
}

.help-q {
  fill: #fff;
  font-size: 16px;
  font-weight: 700;
}

.preview {
  height: 214px;
  margin: 2px 2px 0 3px;
  background: #000;
  flex-shrink: 0;
}

.blue-panel {
  margin: 0 4px 0 3px;
  background: #cdd6ea;
  border-left: 1px solid #9aa;
  flex-shrink: 0;
  color: #222;
  font-size: 10.400px;
}

.panel-select {
  margin-top: 3px;
  height: 63px;
  display: flex;
  border-bottom: 1px solid #fff;
  padding-top: 4px;
}

.blue-panel label {
  display: block;
  line-height: 15px;
}

.sel-col {
  width: 188px;
  padding-left: 5px;
}

.sel-btns {
  display: flex;
  gap: 8px;
  padding: 2px 0 0 2px;
}

.wbtn {
  background: #e1e1e1;
  border: 1px solid #adadad;
  padding: 0;
  font-family: inherit;
  font-size: 10.500px;
  color: #222;
  display: flex;
  align-items: center;
  justify-content: center;
}

.sel-btn {
  width: 40px;
  height: 37px;
}

.prev-col {
  width: 292px;
}

.wselect {
  background: #e1e1e1;
  border: 1px solid #adadad;
  display: flex;
  align-items: center;
  justify-content: space-between;
  padding: 0 8px 0 3px;
}

.prev-select {
  width: 240px;
  height: 21px;
  margin-left: 1px;
  font-size: 10.900px;
}

.check-col {
  flex: 1;
  margin-top: -2px;
}

.check {
  height: 19px;
  display: flex;
  align-items: center;
  gap: 3px;
  white-space: nowrap;
  font-size: 10.100px;
}

.check i {
  width: 12px;
  height: 12px;
  border: 1px solid #444;
  background: #fff;
  flex-shrink: 0;
}

.more-btn {
  width: 102px;
  height: 21px;
  margin-left: 8px;
  margin-top: 1px;
}

.panel-record {
  height: 37px;
  display: flex;
  align-items: center;
  border-top: 1px solid #aab;
  font-size: 10.600px;
}

.blue-panel .rec-label {
  width: 139px;
  padding-left: 5px;
}

.fast-select {
  width: 113px;
  height: 21px;
  font-size: 10.500px;
}

.opt-btn {
  width: 119px;
  height: 20px;
  margin-left: 8px;
}

.fx-btns {
  margin-left: 67px;
  display: flex;
  gap: 8px;
}

.fx-btn {
  width: 38px;
  height: 27px;
}

.fx-text {
  font-family: "Liberation Serif", serif;
  font-size: 26px;
  color: #000;
}

.control-bar {
  height: 69px;
  background: #f0f0f0;
  flex-shrink: 0;
  display: flex;
  align-items: flex-start;
  padding: 5px 0 0 77px;
}

.ctl-btn {
  width: 63px;
  height: 42px;
  margin-top: 9px;
  margin-right: 5px;
}

.rec-dot {
  width: 21px;
  height: 21px;
  border-radius: 50%;
  background: radial-gradient(circle at 50% 35%, #c8615a, #9a2a28);
}

.pause-bars {
  display: flex;
  gap: 6px;
}

.pause-bars i {
  width: 7px;
  height: 24px;
  background: #9a9a9a;
}

.stop-box {
  width: 18px;
  height: 18px;
  background: #9a9a9a;
}

.meter-box {
  width: 226px;
  height: 42px;
  margin: 8px 6px 0 -1px;
  border: 1px solid #bbb;
  border-right-color: #fff;
  border-bottom-color: #fff;
  display: flex;
  padding: 5px 4px 0 7px;
}

.spk-btn {
  width: 33px;
  height: 33px;
  flex-shrink: 0;
}

.meter-col {
  flex: 1;
  margin-left: 6px;
}

.meter-top {
  display: flex;
  justify-content: space-between;
  font-size: 11px;
  line-height: 14px;
  margin-top: -3px;
}

.meter-ticks {
  display: flex;
  justify-content: space-between;
  padding: 0 1px 0 9px;
  font-size: 6px;
  line-height: 8px;
  color: #777;
}

.meter-bar {
  height: 10px;
  margin-top: 1px;
  background: #000;
}

.meter-fill {
  width: 57px;
  height: 10px;
  background: linear-gradient(to right, #0c4a00, #d2e800);
  position: relative;
}

/* black needle line through the lit part of the meter */
.meter-fill::after {
  content: "";
  position: absolute;
  left: 0;
  right: 0;
  top: 4px;
  height: 1px;
  background: #111;
}

.snap-btn {
  width: 63px;
  height: 42px;
  margin-top: 9px;
  background: #cce4f7;
  border: 2px dotted #14406b;
}

.thumb {
  width: 108px;
  height: 58px;
  margin-left: 8px;
  border-top: 2px solid #888;
  border-left: 2px solid #888;
  padding-top: 8px;
}

.thumb-dash {
  height: 48px;
  border: 1.500px dashed #11115c;
}

.statusbar {
  flex: 1;
  display: flex;
  align-items: center;
  justify-content: space-between;
  padding: 0 1px 0 2px;
  background: #fff;
  white-space: nowrap;
}

.grip {
  align-self: flex-end;
}
```
